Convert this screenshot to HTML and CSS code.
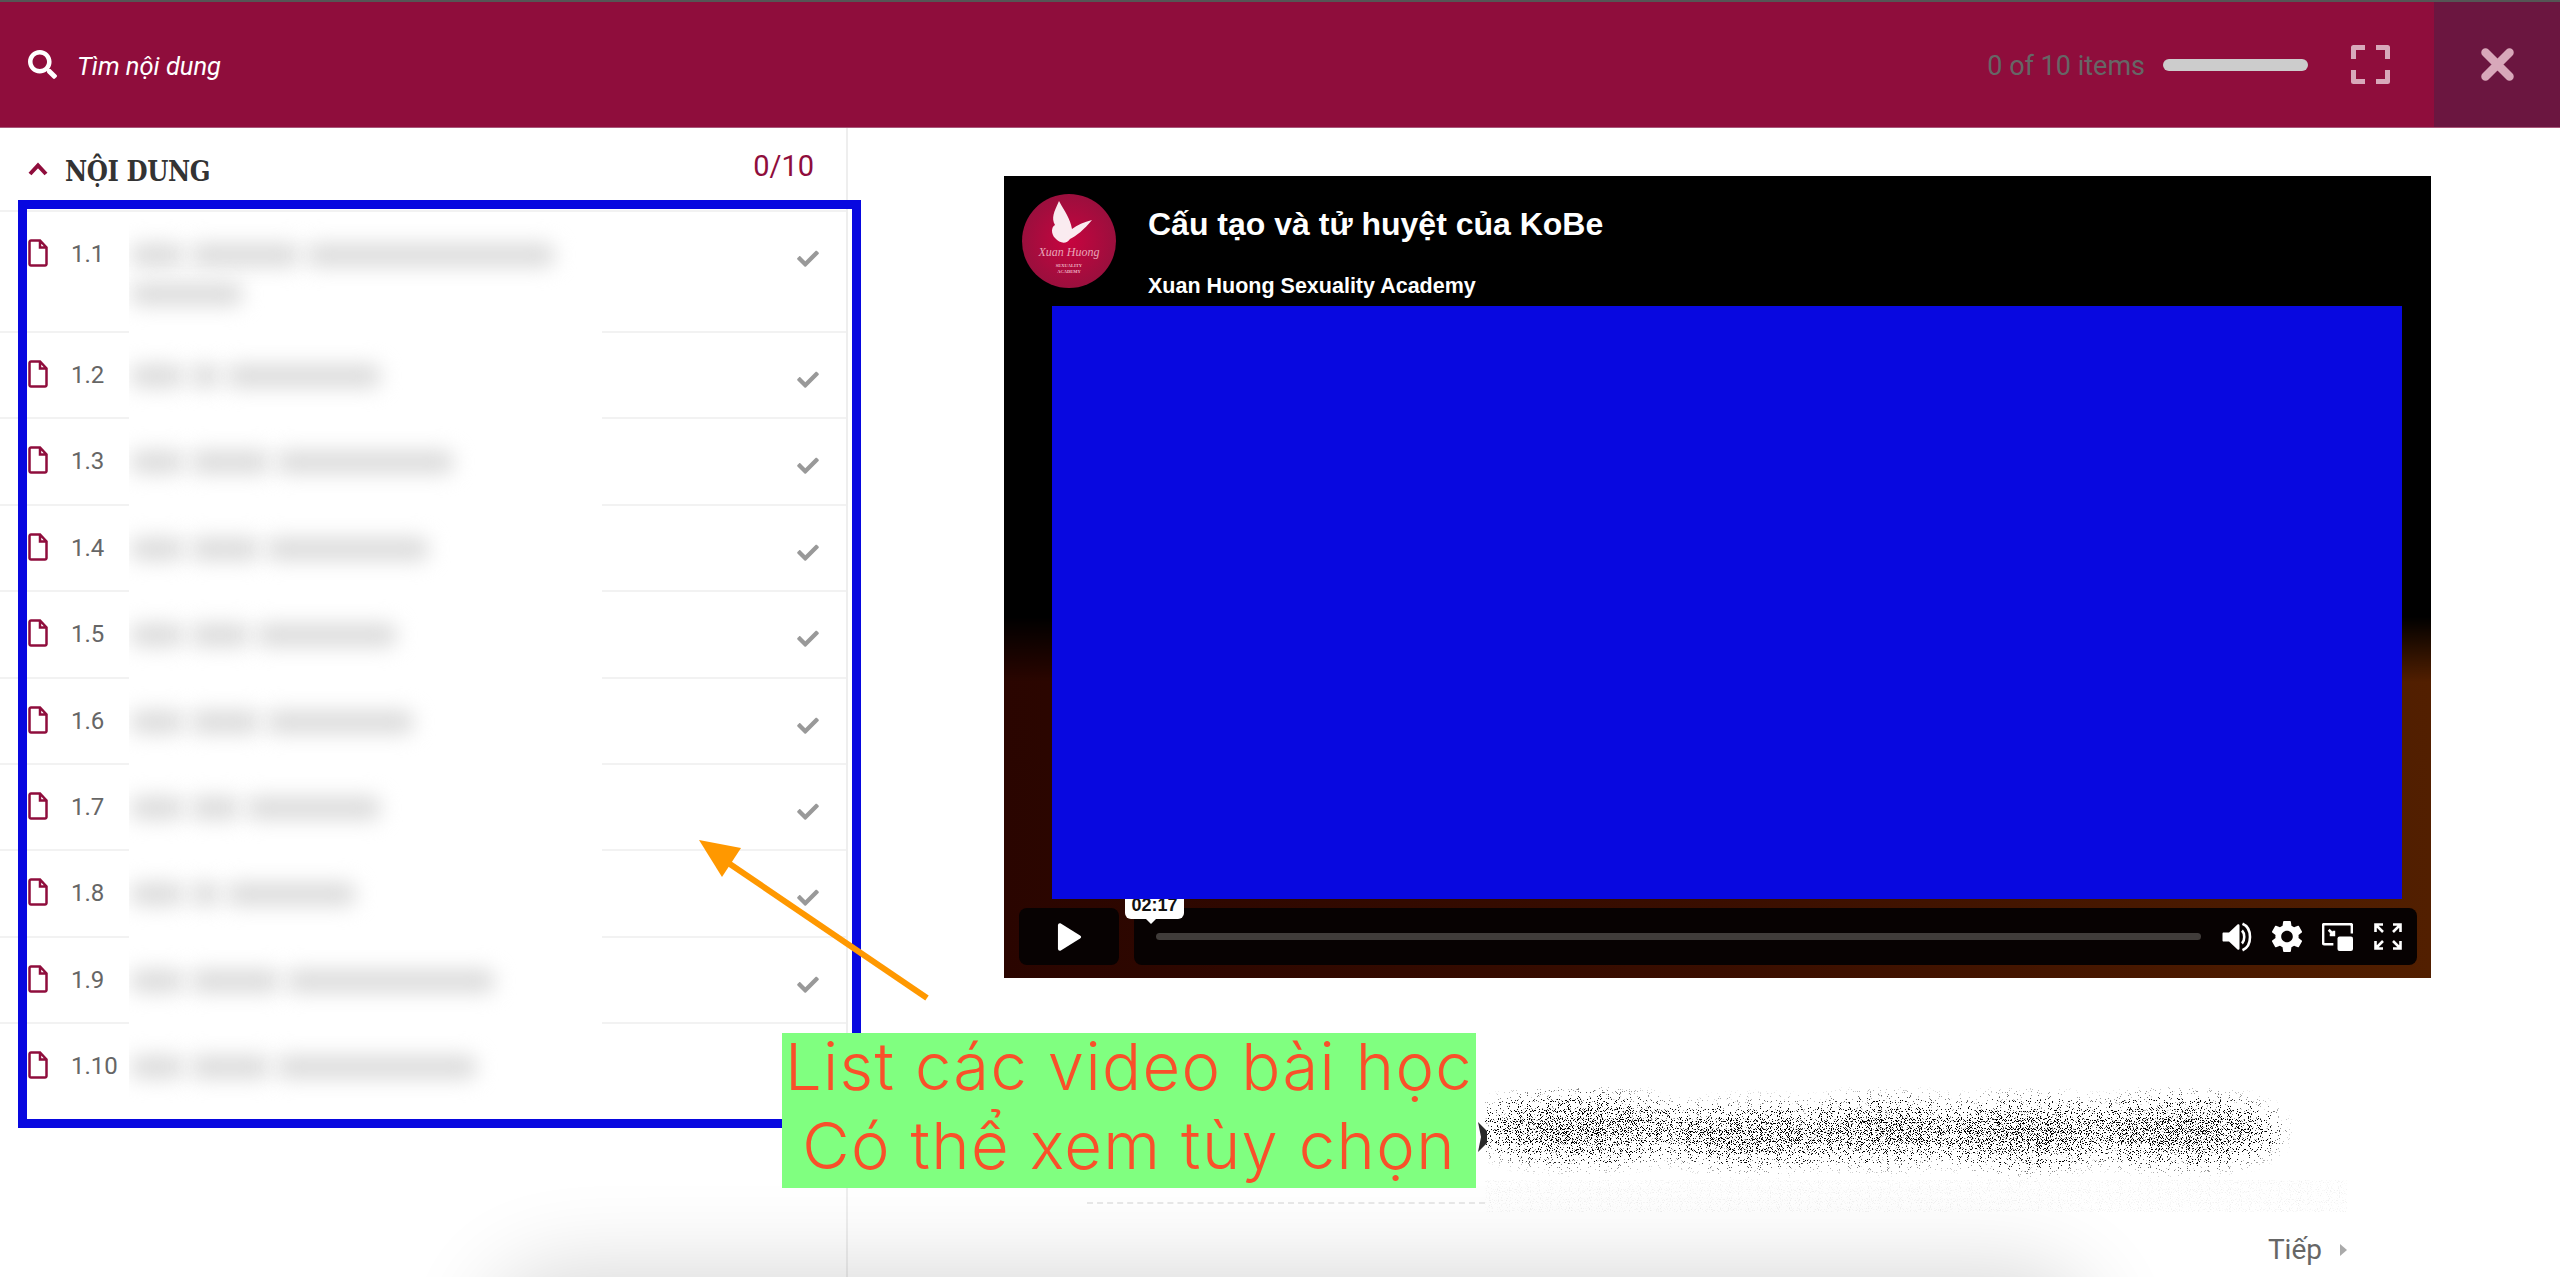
FILE: index.html
```html
<!DOCTYPE html>
<html lang="vi">
<head>
<meta charset="utf-8">
<title>Nội dung</title>
<link rel="stylesheet" href="styles.css">
</head>
<body>
<div class="page">
  <header class="topbar">
    <svg class="search-icon" viewBox="0 0 512 512"><path d="M505 442.7L405.3 343c-4.5-4.5-10.6-7-17-7H372c27.6-35.3 44-79.7 44-128C416 93.1 322.9 0 208 0S0 93.1 0 208s93.1 208 208 208c48.3 0 92.7-16.4 128-44v16.3c0 6.4 2.5 12.5 7 17l99.7 99.7c9.4 9.4 24.6 9.4 33.9 0l28.3-28.3c9.4-9.4 9.4-24.6.1-34zM208 336c-70.7 0-128-57.2-128-128 0-70.7 57.2-128 128-128 70.7 0 128 57.2 128 128 0 70.7-57.2 128-128 128z"/></svg>
    <span class="search-text">Tìm nội dung</span>
    <span class="count">0 of 10 items</span>
    <span class="progress"></span>
    <svg class="expand" viewBox="0 0 39 39"><path d="M2.5 14V2.5H14M25 2.5H36.5V14M36.5 25V36.5H25M14 36.5H2.5V25"/></svg>
    <div class="close"><svg viewBox="0 0 33 33"><path d="M4.5 4.5L28.5 28.5M28.5 4.5L4.500 28.5"/></svg></div>
  </header>

  <main class="body">
    <aside class="sidebar">
      <div class="side-head">
        <svg class="chev" viewBox="0 0 20 14"><path d="M2 12L10 3.500L18 12"/></svg>
        <h2 class="side-title">NỘI DUNG</h2>
        <span class="side-count">0/10</span>
      </div>
      <ul class="lessons">
        <li class="lesson lesson-tall">
          <svg class="doc" viewBox="0 0 20 28"><path d="M3 1.500h9l6.500 7V25a1.500 1.500 0 0 1-1.500 1.500H3A1.500 1.500 0 0 1 1.500 25V3A1.500 1.500 0 0 1 3 1.500zM12 1.500V8.500h6.500"/></svg>
          <span class="num">1.1</span>
          <div class="title-cell"><div class="blur-line"><i class="w" style="width:54px"></i><i class="w" style="width:110px"></i><i class="w" style="width:249px"></i></div><div class="blur-line"><i class="w" style="width:113px"></i></div></div>
          <svg class="tick" viewBox="0 0 512 400"><path d="M173.900 389.400l-166.400-166.400c-10-10-10-26.200 0-36.200l36.200-36.200c10-10 26.200-10 36.200 0L192 262.700 432.100 22.600c10-10 26.200-10 36.200 0l36.200 36.200c10 10 10 26.200 0 36.200l-294.400 294.400c-10 10-26.200 10-36.200 0z"/></svg>
        </li>
        <li class="lesson">
          <svg class="doc" viewBox="0 0 20 28"><path d="M3 1.500h9l6.500 7V25a1.500 1.500 0 0 1-1.500 1.500H3A1.500 1.500 0 0 1 1.500 25V3A1.500 1.500 0 0 1 3 1.500zM12 1.500V8.500h6.500"/></svg>
          <span class="num">1.2</span>
          <div class="title-cell"><div class="blur-line"><i class="w" style="width:54px"></i><i class="w" style="width:30px"></i><i class="w" style="width:155px"></i></div></div>
          <svg class="tick" viewBox="0 0 512 400"><path d="M173.900 389.400l-166.400-166.400c-10-10-10-26.200 0-36.200l36.200-36.200c10-10 26.200-10 36.200 0L192 262.700 432.100 22.600c10-10 26.200-10 36.200 0l36.200 36.200c10 10 10 26.200 0 36.200l-294.400 294.400c-10 10-26.200 10-36.200 0z"/></svg>
        </li>
        <li class="lesson">
          <svg class="doc" viewBox="0 0 20 28"><path d="M3 1.500h9l6.500 7V25a1.500 1.500 0 0 1-1.500 1.500H3A1.500 1.500 0 0 1 1.500 25V3A1.500 1.500 0 0 1 3 1.500zM12 1.500V8.500h6.500"/></svg>
          <span class="num">1.3</span>
          <div class="title-cell"><div class="blur-line"><i class="w" style="width:54px"></i><i class="w" style="width:80px"></i><i class="w" style="width:178px"></i></div></div>
          <svg class="tick" viewBox="0 0 512 400"><path d="M173.900 389.400l-166.400-166.400c-10-10-10-26.200 0-36.200l36.200-36.200c10-10 26.200-10 36.200 0L192 262.700 432.100 22.600c10-10 26.200-10 36.200 0l36.200 36.200c10 10 10 26.200 0 36.200l-294.400 294.400c-10 10-26.200 10-36.200 0z"/></svg>
        </li>
        <li class="lesson">
          <svg class="doc" viewBox="0 0 20 28"><path d="M3 1.500h9l6.500 7V25a1.500 1.500 0 0 1-1.500 1.500H3A1.500 1.500 0 0 1 1.500 25V3A1.500 1.500 0 0 1 3 1.500zM12 1.500V8.500h6.500"/></svg>
          <span class="num">1.4</span>
          <div class="title-cell"><div class="blur-line"><i class="w" style="width:54px"></i><i class="w" style="width:70px"></i><i class="w" style="width:163px"></i></div></div>
          <svg class="tick" viewBox="0 0 512 400"><path d="M173.900 389.400l-166.400-166.400c-10-10-10-26.200 0-36.200l36.200-36.200c10-10 26.200-10 36.200 0L192 262.700 432.100 22.600c10-10 26.200-10 36.200 0l36.200 36.200c10 10 10 26.200 0 36.200l-294.400 294.400c-10 10-26.200 10-36.200 0z"/></svg>
        </li>
        <li class="lesson">
          <svg class="doc" viewBox="0 0 20 28"><path d="M3 1.500h9l6.500 7V25a1.500 1.500 0 0 1-1.500 1.500H3A1.500 1.500 0 0 1 1.500 25V3A1.500 1.500 0 0 1 3 1.500zM12 1.500V8.500h6.500"/></svg>
          <span class="num">1.5</span>
          <div class="title-cell"><div class="blur-line"><i class="w" style="width:54px"></i><i class="w" style="width:60px"></i><i class="w" style="width:141px"></i></div></div>
          <svg class="tick" viewBox="0 0 512 400"><path d="M173.900 389.400l-166.400-166.400c-10-10-10-26.200 0-36.200l36.200-36.200c10-10 26.200-10 36.200 0L192 262.700 432.100 22.600c10-10 26.200-10 36.200 0l36.200 36.200c10 10 10 26.200 0 36.200l-294.400 294.400c-10 10-26.200 10-36.200 0z"/></svg>
        </li>
        <li class="lesson">
          <svg class="doc" viewBox="0 0 20 28"><path d="M3 1.500h9l6.500 7V25a1.500 1.500 0 0 1-1.500 1.500H3A1.500 1.500 0 0 1 1.500 25V3A1.500 1.500 0 0 1 3 1.500zM12 1.500V8.500h6.500"/></svg>
          <span class="num">1.6</span>
          <div class="title-cell"><div class="blur-line"><i class="w" style="width:54px"></i><i class="w" style="width:70px"></i><i class="w" style="width:148px"></i></div></div>
          <svg class="tick" viewBox="0 0 512 400"><path d="M173.900 389.400l-166.400-166.400c-10-10-10-26.200 0-36.200l36.200-36.200c10-10 26.200-10 36.200 0L192 262.700 432.100 22.600c10-10 26.200-10 36.200 0l36.200 36.200c10 10 10 26.200 0 36.200l-294.400 294.400c-10 10-26.200 10-36.200 0z"/></svg>
        </li>
        <li class="lesson">
          <svg class="doc" viewBox="0 0 20 28"><path d="M3 1.500h9l6.500 7V25a1.500 1.500 0 0 1-1.500 1.500H3A1.500 1.500 0 0 1 1.500 25V3A1.500 1.500 0 0 1 3 1.500zM12 1.500V8.500h6.500"/></svg>
          <span class="num">1.7</span>
          <div class="title-cell"><div class="blur-line"><i class="w" style="width:54px"></i><i class="w" style="width:50px"></i><i class="w" style="width:135px"></i></div></div>
          <svg class="tick" viewBox="0 0 512 400"><path d="M173.900 389.400l-166.400-166.400c-10-10-10-26.200 0-36.200l36.200-36.200c10-10 26.200-10 36.200 0L192 262.700 432.100 22.600c10-10 26.200-10 36.200 0l36.200 36.200c10 10 10 26.200 0 36.200l-294.400 294.400c-10 10-26.200 10-36.200 0z"/></svg>
        </li>
        <li class="lesson">
          <svg class="doc" viewBox="0 0 20 28"><path d="M3 1.500h9l6.500 7V25a1.500 1.500 0 0 1-1.500 1.500H3A1.500 1.500 0 0 1 1.500 25V3A1.500 1.500 0 0 1 3 1.500zM12 1.500V8.500h6.500"/></svg>
          <span class="num">1.8</span>
          <div class="title-cell"><div class="blur-line"><i class="w" style="width:54px"></i><i class="w" style="width:30px"></i><i class="w" style="width:130px"></i></div></div>
          <svg class="tick" viewBox="0 0 512 400"><path d="M173.900 389.400l-166.400-166.400c-10-10-10-26.200 0-36.200l36.200-36.200c10-10 26.200-10 36.200 0L192 262.700 432.100 22.600c10-10 26.200-10 36.200 0l36.200 36.200c10 10 10 26.200 0 36.200l-294.400 294.400c-10 10-26.200 10-36.200 0z"/></svg>
        </li>
        <li class="lesson">
          <svg class="doc" viewBox="0 0 20 28"><path d="M3 1.500h9l6.500 7V25a1.500 1.500 0 0 1-1.500 1.500H3A1.500 1.500 0 0 1 1.500 25V3A1.500 1.500 0 0 1 3 1.500zM12 1.500V8.500h6.500"/></svg>
          <span class="num">1.9</span>
          <div class="title-cell"><div class="blur-line"><i class="w" style="width:54px"></i><i class="w" style="width:90px"></i><i class="w" style="width:209px"></i></div></div>
          <svg class="tick" viewBox="0 0 512 400"><path d="M173.900 389.400l-166.400-166.400c-10-10-10-26.200 0-36.200l36.200-36.200c10-10 26.200-10 36.200 0L192 262.700 432.100 22.600c10-10 26.200-10 36.200 0l36.200 36.200c10 10 10 26.200 0 36.200l-294.400 294.400c-10 10-26.200 10-36.200 0z"/></svg>
        </li>
        <li class="lesson lesson-last">
          <svg class="doc" viewBox="0 0 20 28"><path d="M3 1.500h9l6.500 7V25a1.500 1.500 0 0 1-1.500 1.500H3A1.500 1.500 0 0 1 1.500 25V3A1.500 1.500 0 0 1 3 1.500zM12 1.500V8.500h6.500"/></svg>
          <span class="num">1.10</span>
          <div class="title-cell"><div class="blur-line"><i class="w" style="width:54px"></i><i class="w" style="width:80px"></i><i class="w" style="width:201px"></i></div></div>
        </li>
      </ul>
    </aside>

    <section class="content">
      <div class="video">
        <div class="video-head">
          <svg class="logo" viewBox="0 0 94 94">
            <defs><radialGradient id="lg" cx="50%" cy="50%" r="55%"><stop offset="0" stop-color="#c8043f"/><stop offset="1" stop-color="#96103d"/></radialGradient></defs>
            <circle cx="47" cy="47" r="47" fill="url(#lg)"/>
            <path class="fly" d="M37 7C32 18 29 24 33 31C29 33 29 40 33 44C38 50 45 50 48 45C54 42 62 36 70 26C62 28 55 31 50 35C48 24 43 18 37 7Z"/>
            <text class="logo-script" x="47" y="62" text-anchor="middle">Xuan Huong</text>
            <text class="logo-small" x="47" y="73" text-anchor="middle">SEXUALITY</text>
            <text class="logo-small" x="47" y="79" text-anchor="middle">ACADEMY</text>
          </svg>
          <div class="video-titles">
            <div class="video-title">Cấu tạo và tử huyệt của KoBe</div>
            <div class="video-channel">Xuan Huong Sexuality Academy</div>
          </div>
        </div>
        <div class="controls">
          <button class="play"><svg viewBox="0 0 26 30"><path d="M1 3C1 1 2.500 .3 4 1L24 13.500C25.500 14.500 25.500 15.500 24 16.500L4 29C2.500 29.700 1 29 1 27Z"/></svg></button>
          <div class="ctrl-bar">
            <div class="bubble"><span class="bubble-text">02:17</span></div>
            <div class="track"></div>
            <svg class="c-vol" viewBox="0 0 30 30"><path class="solid" d="M1 10.500H6.500L15 2.500C16 1.800 17 2.500 17 3.500V26.500C17 27.500 16 28.200 15 27.500L6.500 19.500H1C.4 19.500 0 19 0 18.500V11.500C0 11 .4 10.500 1 10.500Z"/><path class="ring" d="M19.500 8.500C22.500 11.500 22.500 18.500 19.500 21.500M20 1.800C30 6 30 24 20 28.200"/></svg>
            <svg class="c-gear" viewBox="2.700 2.700 18.600 18.600"><path class="solid" d="M19.140 12.940c.04-.3.06-.61.06-.94 0-.32-.02-.64-.07-.94l2.030-1.580c.18-.14.23-.41.12-.61l-1.920-3.320c-.12-.22-.37-.29-.59-.22l-2.390.96c-.5-.38-1.030-.7-1.620-.94l-.36-2.540c-.04-.24-.24-.41-.48-.41h-3.840c-.24 0-.43.17-.47.41l-.36 2.540c-.59.24-1.130.57-1.620.94l-2.390-.96c-.22-.08-.47 0-.59.22L2.740 8.870c-.12.21-.08.47.12.61l2.030 1.580c-.05.3-.09.63-.09.94s.02.64.07.94l-2.030 1.580c-.18.14-.23.41-.12.61l1.920 3.320c.12.22.37.29.59.22l2.390-.96c.5.38 1.030.7 1.620.94l.36 2.540c.05.24.24.41.48.41h3.840c.24 0 .44-.17.47-.41l.36-2.540c.59-.24 1.130-.56 1.620-.94l2.390.96c.22.08.47 0 .59-.22l1.920-3.320c.12-.22.07-.47-.12-.61l-2.010-1.580zM12 15.600c-1.980 0-3.600-1.620-3.600-3.600s1.620-3.600 3.600-3.600 3.600 1.620 3.600 3.600-1.620 3.600-3.600 3.600z"/></svg>
            <svg class="c-pip" viewBox="0 0 30 27"><path class="ring" d="M11 20.500H2.500C1.500 20.500 1 20 1 19V2.500C1 1.500 1.500 1 2.500 1H27C28 1 29 1.500 29 2.500V10"/><path class="ring" d="M6.500 6.500L11.500 11.500M11.500 7.500V11.500H7.500"/><rect class="solid" x="15" y="13" width="15" height="14" rx="2"/></svg>
            <svg class="c-full" viewBox="0 0 28 27"><path class="ring" d="M1.500 9V1.500H9M1.500 1.500L9 9M19 1.500H26.500V9M26.500 1.500L19 9M1.500 18V25.500H9M1.500 25.500L9 18M26.500 18V25.500H19M26.500 25.500L19 18"/></svg>
          </div>
        </div>
        <div class="redact"></div>
      </div>

      <div class="desc">
        <svg class="noise" viewBox="0 0 862 125" aria-hidden="true">
          <defs>
            <filter id="sp" x="0" y="0" width="100%" height="100%" color-interpolation-filters="sRGB">
              <feGaussianBlur in="SourceAlpha" stdDeviation="15" result="b"/>
              <feTurbulence type="fractalNoise" baseFrequency="1.1" numOctaves="1" seed="7" result="t"/>
              <feColorMatrix in="t" type="matrix" values="0 0 0 0 0  0 0 0 0 0  0 0 0 0 0  5 0 0 0 -2.400" result="n"/>
              <feComposite in="n" in2="b" operator="arithmetic" k1="0" k2="1" k3="0.82" k4="-1.050" result="m"/>
              <feComponentTransfer in="m"><feFuncA type="linear" slope="4" intercept="0"/></feComponentTransfer>
            </filter>
            <filter id="fa" x="0" y="0" width="100%" height="100%" color-interpolation-filters="sRGB">
              <feTurbulence type="fractalNoise" baseFrequency="0.9" numOctaves="1" seed="3" result="t"/>
              <feColorMatrix in="t" type="matrix" values="0 0 0 0 .6  0 0 0 0 .6  0 0 0 0 .6  4 0 0 0 -2.200"/>
            </filter>
          </defs>
          <g filter="url(#sp)">
            <rect x="0" y="0" width="810" height="100" fill="none"/>
            <ellipse cx="95" cy="42" rx="105" ry="28"/>
            <ellipse cx="270" cy="48" rx="100" ry="24"/>
            <ellipse cx="400" cy="44" rx="90" ry="26"/>
            <ellipse cx="540" cy="46" rx="90" ry="28"/>
            <ellipse cx="695" cy="44" rx="100" ry="28"/>
          </g>
          <rect x="0" y="93" width="862" height="32" filter="url(#fa)" opacity=".2"/>
        </svg>
        <svg class="glyph" viewBox="0 0 9 30"><path d="M0 0L9 9V21L0 30L3 15Z"/></svg>
      </div>
      <div class="pager">
        <span class="next">Tiếp</span>
        <svg class="next-caret" viewBox="0 0 7 12"><path d="M0 0L7 6L0 12Z"/></svg>
      </div>
    </section>
  </main>

  <div class="floor-shadow"></div>
  <div class="mark-box"></div>
  <svg class="mark-arrow" viewBox="0 0 240 170"><path class="shaft" d="M228 158L22 18"/><path class="head" d="M0 0L42 8L23 37Z"/></svg>
  <div class="callout"><div class="callout-text">List các video bài học<br>Có thể xem tùy chọn</div></div>
</div>
</body>
</html>
```
FILE: styles.css
```css
* { box-sizing: border-box; }
html, body { margin: 0; padding: 0; background: #fff; }
.page {
  position: relative; width: 2560px; height: 1277px; overflow: hidden;
  display: flex; flex-direction: column;
  font-family: Roboto, "Liberation Sans", sans-serif;
}

/* top bar */
.topbar {
  height: 128px; flex: none; display: flex; align-items: center;
  background: #8f0d3c; border-top: 2px solid #555; border-bottom: 1px solid #a8587a;
  padding-left: 28px;
}
.search-icon { width: 29px; height: 29px; fill: #fff; flex: none; }
.search-text { margin-left: 20px; margin-top: 2px; font-size: 25.500px; font-style: italic; color: #fff; }
.count { margin-left: auto; margin-top: 2px; font-size: 27px; color: #666; }
.progress { width: 145px; height: 12px; margin-left: 18px; border-radius: 6px; background: #ccc; }
.expand { width: 39px; height: 39px; margin-left: 43px; fill: none; stroke: #d8a8ba; stroke-width: 5; stroke-linejoin: round; }
.close {
  width: 126px; height: 100%; margin-left: 44px; background: #6b1640;
  display: flex; align-items: center; justify-content: center;
}
.close svg { width: 33px; height: 33px; fill: none; stroke: #d8a8ba; stroke-width: 8.500; stroke-linecap: round; }

/* body */
.body { flex: 1; display: flex; min-height: 0; }
.sidebar { width: 848px; flex: none; border-right: 2px solid #eee; }
.side-head { height: 82px; display: flex; align-items: center; padding: 0 32px 0 28px; }
.chev { width: 20px; height: 14px; fill: none; stroke: #8f0d3c; stroke-width: 4; }
.side-title {
  margin: 4px 0 0 17px; font: 700 27px "DejaVu Serif Condensed", "DejaVu Serif", serif; color: #333;
  font-stretch: condensed; letter-spacing: -.4px;
}
.side-count { margin-left: auto; margin-top: -6px; font-size: 29px; color: #8f0d3c; }
.lessons { list-style: none; margin: 0; padding: 0; border-top: 2px solid #f2f2f2; }
.lesson {
  height: 86.400px; padding-left: 28px; border-bottom: 2px solid #f2f2f2;
  display: grid; grid-template-columns: 43px 58px 473px 1fr; align-items: start;
}
.lesson-tall { height: 121px; }
.lesson-last { border-bottom: 0; height: 110px; }
.doc { width: 20px; height: 28px; margin-top: 27px; fill: none; stroke: #8f0d3c; stroke-width: 2.500; }
.num { margin-top: 27px; font-size: 24px; line-height: 30px; color: #666; }
.title-cell {
  background: #fff; height: calc(100% + 2px); padding: 31px 0 0 1px; overflow: hidden;
}
.blur-line { display: flex; gap: 6px; height: 24px; margin-bottom: 15px; }
.w { display: block; height: 24px; background: #dcdcdc; filter: blur(10px); border-radius: 10px; }
.tick { width: 22px; height: 17px; margin-top: 38px; justify-self: end; margin-right: 27px; fill: #999; }

/* video */
.content { flex: 1; padding: 48px 0 0 156px; min-width: 0; }
.video { position: relative; width: 1427px; height: 802px; overflow: hidden; background: #000; }
.video::after {
  content: ""; position: absolute; inset: 55% 0 0 0;
  background: linear-gradient(to right, #2a0500, #3a0e00 50%, #521f00);
  -webkit-mask-image: linear-gradient(to bottom, transparent, #000 18%);
  mask-image: linear-gradient(to bottom, transparent, #000 18%);
}
.video-head { position: relative; z-index: 1; display: flex; padding: 18px 0 0 18px; }
.logo { width: 94px; height: 94px; flex: none; }
.fly { fill: #fff; opacity: .92; }
.logo-script { font: italic 12px "Liberation Serif", serif; fill: #e9a5b8; }
.logo-small { font: 700 4.500px "Liberation Serif", serif; fill: #eeb8c6; }
.video-titles { margin-left: 32px; color: #fff; font-family: "Liberation Sans", sans-serif; font-weight: 700; }
.video-title { font-size: 32px; line-height: 36px; margin-top: 12px; }
.video-channel { font-size: 21.500px; line-height: 24px; margin-top: 32px; }
.redact { position: absolute; z-index: 3; left: 48px; top: 130px; width: 1350px; height: 593px; background: #0808e0; }
.controls {
  position: absolute; z-index: 2; left: 15px; top: 732px; width: 1398px; height: 57px;
  display: flex; gap: 15px;
}
.play { width: 100px; height: 57px; flex: none; padding: 0 0 0 38px; border: 0; border-radius: 8px; background: #070202; display: flex; align-items: center; }
.play svg { width: 25px; height: 30px; fill: #fff; }
.ctrl-bar {
  flex: 1; position: relative; display: flex; align-items: center;
  background: #070202; border-radius: 8px; padding-left: 22px;
}
.track { width: 1045px; height: 7px; border-radius: 4px; background: #403c3a; flex: none; }
.solid { fill: #fff; }
.ring { fill: none; stroke: #fff; stroke-width: 2.600; }
.c-vol { width: 31px; height: 30px; margin-left: 21px; flex: none; }
.c-gear { width: 30px; height: 31px; margin-left: 19px; flex: none; }
.c-pip { width: 31px; height: 28px; margin-left: 20px; flex: none; }
.c-full { width: 28px; height: 27px; margin-left: 21px; flex: none; }
.bubble {
  position: absolute; left: -9px; bottom: 46px; width: 59px; height: 30px;
  background: #fff; border-radius: 6px; text-align: center;
}
.bubble::after {
  content: ""; position: absolute; left: 21px; top: 100%;
  border: 5px solid transparent; border-top-color: #fff; border-bottom: 0;
}
.bubble-text { font: 700 18px/22px "Liberation Sans", sans-serif; color: #111; display: block; margin-top: 5px; }

/* description */
.desc { position: relative; height: 234px; }
.desc::after {
  content: ""; position: absolute; left: 83px; width: 398px; top: 224px;
  border-top: 2px dashed #e8e8e8;
}
.noise { position: absolute; left: 481px; top: 109px; width: 862px; height: 125px; }
.glyph { position: absolute; left: 474px; top: 144px; width: 9px; height: 30px; fill: #2a2a2a; }
.pager { display: flex; align-items: center; width: 1343px; justify-content: flex-end; margin-top: 21px; }
.next { font-size: 28px; color: #666; }
.next-caret { width: 7px; height: 12px; margin-left: 18px; fill: #aaa; }

/* annotations over the page */
.floor-shadow {
  position: absolute; left: 520px; top: 1300px; width: 1540px; height: 100px;
  border-radius: 40px; box-shadow: 0 0 90px 30px rgba(0,0,0,.16);
}
.mark-box { position: absolute; left: 18px; top: 200px; width: 843px; height: 928px; border: 9px solid #0808e0; }
.mark-arrow { position: absolute; left: 699px; top: 840px; width: 240px; height: 170px; overflow: visible; }
.shaft { stroke: #ff9800; stroke-width: 6; fill: none; }
.head { fill: #ff9800; }
.callout {
  position: absolute; left: 782px; top: 1033px; width: 694px; height: 155px;
  background: #80ff80; color: #f9502a; text-align: center; white-space: nowrap;
  font: 300 65px/79px Inter, "Noto Sans", sans-serif; letter-spacing: 1.400px;
}
.callout-text { margin-top: -6px; }
```
